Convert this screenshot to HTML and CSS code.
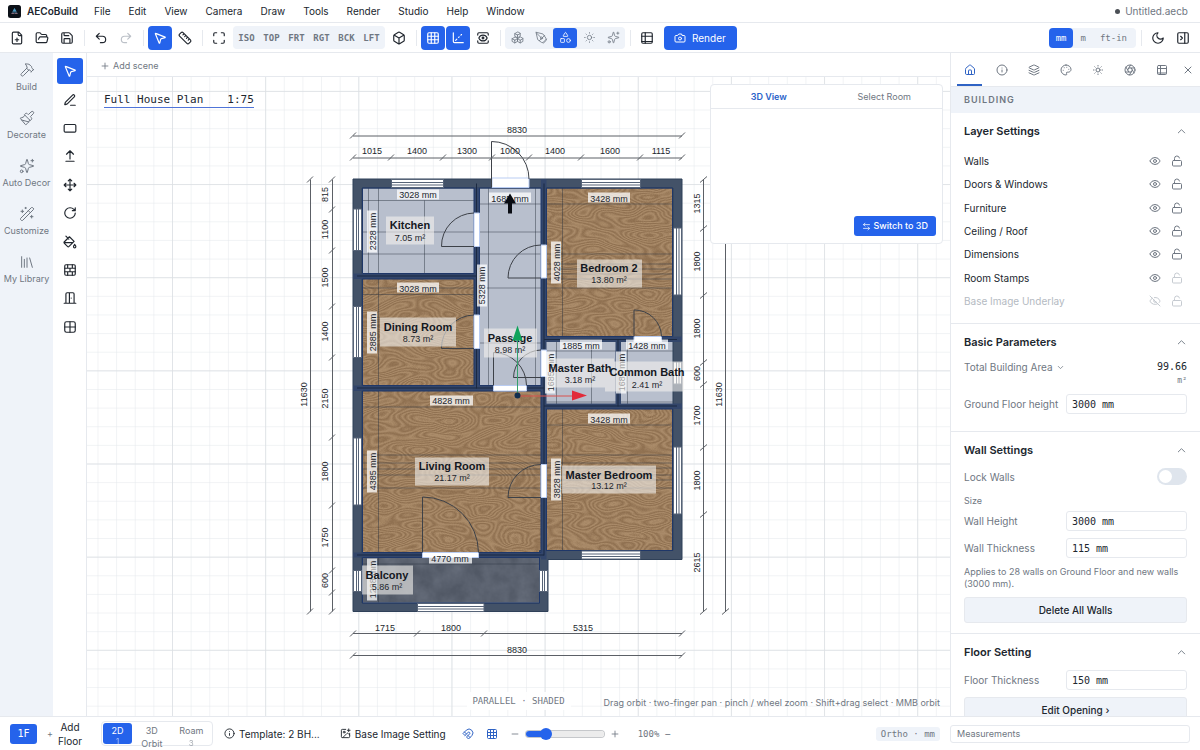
FILE: index.html
```html
<!DOCTYPE html>
<html lang="en">
<head>
<meta charset="utf-8">
<meta name="viewport" content="width=device-width, initial-scale=1">
<title>AECoBuild</title>
<link rel="stylesheet" href="styles.css">
</head>
<body>
<svg class="sprite" aria-hidden="true">
  <symbol id="file-plus" viewBox="0 0 24 24"><path d="M15 2H6a2 2 0 0 0-2 2v16a2 2 0 0 0 2 2h12a2 2 0 0 0 2-2V7ZM14 2v4a2 2 0 0 0 2 2h4M9 15h6M12 18v-6"/></symbol>
  <symbol id="folder" viewBox="0 0 24 24"><path d="m6 14 1.500-2.900A2 2 0 0 1 9.240 10H20a2 2 0 0 1 1.940 2.500l-1.540 6a2 2 0 0 1-1.950 1.500H4a2 2 0 0 1-2-2V5a2 2 0 0 1 2-2h3.900a2 2 0 0 1 1.690.9l.81 1.200a2 2 0 0 0 1.670.9H18a2 2 0 0 1 2 2v2"/></symbol>
  <symbol id="save" viewBox="0 0 24 24"><path d="M15.200 3a2 2 0 0 1 1.400.6l3.800 3.800a2 2 0 0 1 .6 1.400V19a2 2 0 0 1-2 2H5a2 2 0 0 1-2-2V5a2 2 0 0 1 2-2zM17 21v-7a1 1 0 0 0-1-1H8a1 1 0 0 0-1 1v7M7 3v4a1 1 0 0 0 1 1h7"/></symbol>
  <symbol id="undo" viewBox="0 0 24 24"><path d="M9 14 4 9l5-5M4 9h10.500a5.500 5.500 0 0 1 0 11H11"/></symbol>
  <symbol id="redo" viewBox="0 0 24 24"><path d="m15 14 5-5-5-5M20 9H9.500a5.500 5.500 0 0 0 0 11H13"/></symbol>
  <symbol id="pointer" viewBox="0 0 24 24"><path d="M4.037 4.688a.495.495 0 0 1 .651-.651l16 6.500a.5.5 0 0 1-.063.947l-6.124 1.580a2 2 0 0 0-1.438 1.435l-1.579 6.126a.5.5 0 0 1-.947.063z"/></symbol>
  <symbol id="ruler" viewBox="0 0 24 24"><path d="M21.300 15.300a2.400 2.400 0 0 1 0 3.400l-2.600 2.600a2.400 2.400 0 0 1-3.400 0L2.700 8.700a2.410 2.410 0 0 1 0-3.400l2.600-2.600a2.410 2.410 0 0 1 3.400 0ZM14.500 12.500l2-2M11.500 9.500l2-2M8.500 6.500l2-2M17.500 15.500l2-2"/></symbol>
  <symbol id="maximize" viewBox="0 0 24 24"><path d="M8 3H5a2 2 0 0 0-2 2v3M21 8V5a2 2 0 0 0-2-2h-3M3 16v3a2 2 0 0 0 2 2h3M16 21h3a2 2 0 0 0 2-2v-3"/></symbol>
  <symbol id="box" viewBox="0 0 24 24"><path d="M21 8a2 2 0 0 0-1-1.730l-7-4a2 2 0 0 0-2 0l-7 4A2 2 0 0 0 3 8v8a2 2 0 0 0 1 1.730l7 4a2 2 0 0 0 2 0l7-4A2 2 0 0 0 21 16ZM3.300 7l8.700 5 8.700-5M12 22V12"/></symbol>
  <symbol id="grid3" viewBox="0 0 24 24"><rect x="3" y="3" width="18" height="18" rx="2"/><path d="M3 9h18M3 15h18M9 3v18M15 3v18"/></symbol>
  <symbol id="grid2" viewBox="0 0 24 24"><rect x="3" y="3" width="18" height="18" rx="3"/><path d="M3 12h18M12 3v18"/></symbol>
  <symbol id="axes" viewBox="0 0 24 24"><path d="M4 3v15a2 2 0 0 0 2 2h15M8 16l2-2M13 11l1-1M17 7l1-1"/></symbol>
  <symbol id="view" viewBox="0 0 24 24"><path d="M21 17v2a2 2 0 0 1-2 2H5a2 2 0 0 1-2-2v-2M21 7V5a2 2 0 0 0-2-2H5a2 2 0 0 0-2 2v2M18.944 12.330a1 1 0 0 0 0-.660 7.500 7.500 0 0 0-13.888 0 1 1 0 0 0 0 .660 7.500 7.500 0 0 0 13.888 0"/><circle cx="12" cy="12" r="1.500"/></symbol>
  <symbol id="boxes" viewBox="0 0 24 24"><path d="M7 11.500 2 14.200v5L7 22l5-2.800v-5zM17 11.500l-5 2.700v5l5 2.800 5-2.800v-5zM12 2 7 4.800v5l5 2.700 5-2.700v-5zM7 17l-5-2.800M7 17v5M7 17l5-2.800 5 2.800 5-2.800M17 17v5M12 7.500 7 4.800M12 7.500l5-2.700M12 7.500v5"/></symbol>
  <symbol id="pen" viewBox="0 0 24 24"><path d="M2 3l3 13 7 5 4 1 5-5-1-4-5-7zM2 3l9 9M15 21l6-6M8 18l10-10"/><circle cx="12" cy="13" r="2"/></symbol>
  <symbol id="shapes" viewBox="0 0 24 24"><path d="M8.300 10a.7.7 0 0 1-.626-1.079L11.400 3a.7.7 0 0 1 1.198-.043L16.300 8.900a.7.7 0 0 1-.572 1.100Z"/><rect x="3" y="14" width="7" height="7" rx="1"/><circle cx="17.500" cy="17.500" r="3.500"/></symbol>
  <symbol id="sun" viewBox="0 0 24 24"><circle cx="12" cy="12" r="4"/><path d="M12 3v1M12 20v1M3 12h1M20 12h1M18.400 5.600l-.7.700M6.300 17.700l-.7.700M5.600 5.600l.7.700M17.700 17.700l.7.700"/></symbol>
  <symbol id="sparkles" viewBox="0 0 24 24"><path d="M9.937 15.500A2 2 0 0 0 8.500 14.063l-6.135-1.582a.5.5 0 0 1 0-.962L8.500 9.936A2 2 0 0 0 9.937 8.500l1.582-6.135a.5.5 0 0 1 .963 0L14.063 8.500A2 2 0 0 0 15.500 9.937l6.135 1.581a.5.5 0 0 1 0 .964L15.500 14.063a2 2 0 0 0-1.437 1.437l-1.582 6.135a.5.5 0 0 1-.963 0zM20 2v4M22 4h-4"/><circle cx="4" cy="20" r="2"/></symbol>
  <symbol id="table" viewBox="0 0 24 24"><rect x="3" y="3" width="18" height="18" rx="2"/><path d="M3 9h18M3 18h18M9 3v18"/></symbol>
  <symbol id="camera" viewBox="0 0 24 24"><path d="M14.500 4h-5L7 7H4a2 2 0 0 0-2 2v9a2 2 0 0 0 2 2h16a2 2 0 0 0 2-2V9a2 2 0 0 0-2-2h-3z"/><circle cx="12" cy="13" r="3"/></symbol>
  <symbol id="moon" viewBox="0 0 24 24"><path d="M12 3a6 6 0 0 0 9 9 9 9 0 1 1-9-9Z"/></symbol>
  <symbol id="panel" viewBox="0 0 24 24"><rect x="3" y="3" width="18" height="18" rx="2"/><path d="M15 3v18M8 9l3 3-3 3"/></symbol>
  <symbol id="house" viewBox="0 0 24 24"><path d="M15 21v-8a1 1 0 0 0-1-1h-4a1 1 0 0 0-1 1v8M3 10a2 2 0 0 1 .709-1.528l7-5.999a2 2 0 0 1 2.582 0l7 5.999A2 2 0 0 1 21 10v9a2 2 0 0 1-2 2H5a2 2 0 0 1-2-2z"/></symbol>
  <symbol id="info" viewBox="0 0 24 24"><circle cx="12" cy="12" r="10"/><path d="M12 16v-4M12 8v.1"/></symbol>
  <symbol id="layers" viewBox="0 0 24 24"><path d="M12.830 2.180a2 2 0 0 0-1.660 0L2.600 6.080a1 1 0 0 0 0 1.830l8.580 3.910a2 2 0 0 0 1.660 0l8.580-3.900a1 1 0 0 0 0-1.830ZM22 12.650l-9.170 4.160a2 2 0 0 1-1.660 0L2 12.650M22 17.650l-9.170 4.160a2 2 0 0 1-1.660 0L2 17.650"/></symbol>
  <symbol id="palette" viewBox="0 0 24 24"><path d="M12 2a10 10 0 0 0 0 20c.9 0 1.600-.7 1.600-1.700 0-.4-.2-.8-.4-1.100-.3-.3-.4-.7-.4-1.100a1.640 1.640 0 0 1 1.600-1.700h2c3 0 5.600-2.500 5.600-5.500C22 6 17.500 2 12 2zM13.500 6.500v.1M17.500 10.500v.1M8.500 7.500v.1M6.500 12.500v.1"/></symbol>
  <symbol id="aperture" viewBox="0 0 24 24"><circle cx="12" cy="12" r="10"/><path d="m14.310 8 5.740 9.940M9.690 8h11.480M7.380 12l5.740-9.940M9.690 16 3.950 6.060M14.310 16H2.830M16.620 12l-5.740 9.940"/></symbol>
  <symbol id="x" viewBox="0 0 24 24"><path d="M18 6 6 18M6 6l12 12"/></symbol>
  <symbol id="eye" viewBox="0 0 24 24"><path d="M2.062 12.348a1 1 0 0 1 0-.696 10.750 10.750 0 0 1 19.876 0 1 1 0 0 1 0 .696 10.750 10.750 0 0 1-19.876 0"/><circle cx="12" cy="12" r="3"/></symbol>
  <symbol id="eye-off" viewBox="0 0 24 24"><path d="M10.700 5.100a10.700 10.700 0 0 1 11.200 6.600 1 1 0 0 1 0 .7 10.700 10.700 0 0 1-1.400 2.500M14.100 14.200a3 3 0 0 1-4.200-4.200M17.500 17.500a10.800 10.800 0 0 1-15.400-5.100 1 1 0 0 1 0-.7 10.800 10.800 0 0 1 4.400-5.200M2 2l20 20"/></symbol>
  <symbol id="unlock" viewBox="0 0 24 24"><rect x="3" y="11" width="18" height="11" rx="2"/><path d="M7 11V7a5 5 0 0 1 9.900-1"/></symbol>
  <symbol id="up" viewBox="0 0 24 24"><path d="m5 15 7-7 7 7"/></symbol>
  <symbol id="down" viewBox="0 0 24 24"><path d="m6 9 6 6 6-6"/></symbol>
  <symbol id="hammer" viewBox="0 0 24 24"><path d="m15 12-8.373 8.373a1 1 0 1 1-3-3L12 9M18 15l4-4M21.500 11.500l-1.914-1.914A2 2 0 0 1 19 8.172V7l-2.260-2.260a6 6 0 0 0-4.202-1.756L9 2.960l.92.82A6.180 6.180 0 0 1 12 8.400V10l2 2h1.172a2 2 0 0 1 1.414.586L18.500 14.500"/></symbol>
  <symbol id="brush" viewBox="0 0 24 24"><path d="m14.622 17.897-10.680-2.913M18.376 2.622a1 1 0 1 1 3.002 3.002L17.360 9.643a.5.5 0 0 0 0 .707l.944.944a2.410 2.410 0 0 1 0 3.408l-.944.944a.5.5 0 0 1-.707 0L8.354 7.348a.5.5 0 0 1 0-.707l.944-.944a2.410 2.410 0 0 1 3.408 0l.944.944a.5.5 0 0 0 .707 0zM9 8c-1.804 2.710-3.970 3.460-6.583 3.948a.507.507 0 0 0-.302.819l7.320 8.883a1 1 0 0 0 1.185.204C12.735 20.405 16 16.792 16 15"/></symbol>
  <symbol id="wand" viewBox="0 0 24 24"><path d="m21.640 3.640-1.280-1.280a1.210 1.210 0 0 0-1.720 0L2.360 18.640a1.210 1.210 0 0 0 0 1.720l1.280 1.280a1.200 1.200 0 0 0 1.720 0L21.640 5.360a1.200 1.200 0 0 0 0-1.720M14 7l3 3M5 6v4M19 14v4M10 2v2M7 8H3M21 16h-4M11 3H9"/></symbol>
  <symbol id="library" viewBox="0 0 24 24"><path d="m16 6 4 14M12 6v14M8 8v12M4 4v16"/></symbol>
  <symbol id="pencil" viewBox="0 0 24 24"><path d="M13 21h8M16.376 3.622a1 1 0 0 1 3.002 3.002L7.368 18.635a2 2 0 0 1-.855.506l-2.872.838a.5.5 0 0 1-.620-.620l.838-2.872a2 2 0 0 1 .506-.854z"/></symbol>
  <symbol id="rect" viewBox="0 0 24 24"><rect x="2" y="6" width="20" height="13" rx="2"/></symbol>
  <symbol id="push" viewBox="0 0 24 24"><path d="m18 9-6-6-6 6M12 3v14M5 21h14"/></symbol>
  <symbol id="move" viewBox="0 0 24 24"><path d="M12 2v20M15 19l-3 3-3-3M19 9l3 3-3 3M2 12h20M5 9l-3 3 3 3M9 5l3-3 3 3"/></symbol>
  <symbol id="rotate" viewBox="0 0 24 24"><path d="M21 12a9 9 0 1 1-9-9c2.520 0 4.930 1 6.740 2.740L21 8M21 3v5h-5"/></symbol>
  <symbol id="bucket" viewBox="0 0 24 24"><path d="m19 11-8-8-8.600 8.600a2 2 0 0 0 0 2.800l5.200 5.200c.8.8 2 .8 2.800 0L19 11ZM5 2l5 5M2 13h15M22 20a2 2 0 1 1-4 0c0-1.600 1.700-2.400 2-4 .3 1.600 2 2.400 2 4Z"/></symbol>
  <symbol id="bricks" viewBox="0 0 24 24"><rect x="3" y="3" width="18" height="18" rx="2"/><path d="M12 9v6M16 15v6M16 3v6M3 15h18M3 9h18M8 15v6M8 3v6"/></symbol>
  <symbol id="door" viewBox="0 0 24 24"><path d="M11 3h6a2 2 0 0 1 2 2v16M2 21h3M11 21h11M14 12v.1M11 3v18M5 21V5a2 2 0 0 1 2-2h4v18z"/></symbol>
  <symbol id="image-plus" viewBox="0 0 24 24"><path d="M16 5h6M19 2v6M21 11.500V19a2 2 0 0 1-2 2H5a2 2 0 0 1-2-2V5a2 2 0 0 1 2-2h7.500M21 15l-3.100-3.100a2 2 0 0 0-2.800 0L6 21"/><circle cx="9" cy="9" r="2"/></symbol>
  <symbol id="magnet" viewBox="0 0 24 24"><path d="m6 15-4-4 6.750-6.770a7.790 7.790 0 0 1 11 11L13 22l-4-4 6.390-6.360a2.140 2.140 0 0 0-3-3L6 15M5 8l4 4M12 15l4 4"/></symbol>
  <symbol id="swap" viewBox="0 0 24 24"><path d="m8 3-4 4 4 4M4 7h16M16 21l4-4-4-4M20 17H4"/></symbol>
  <symbol id="minus" viewBox="0 0 24 24"><path d="M5 12h14"/></symbol>
  <symbol id="plus" viewBox="0 0 24 24"><path d="M5 12h14M12 5v14"/></symbol>
</svg>

<div class="app">
  <header class="menubar">
    <svg class="logo" viewBox="0 0 26 26" aria-hidden="true"><rect width="26" height="26" rx="5" fill="#0c1118"/><path d="M13 6 6 18h14z" fill="#28475c"/><path d="M13 6 9 13h8z" fill="#4b9cc4"/><path d="m6 18 4-3 3 3 3-3 4 3z" fill="#8a6a78"/></svg>
    <strong class="brand">AECoBuild</strong>
    <nav class="menus" aria-label="Main menu">
      <button>File</button><button>Edit</button><button>View</button><button>Camera</button><button>Draw</button><button>Tools</button><button>Render</button><button>Studio</button><button>Help</button><button>Window</button>
    </nav>
    <span class="filename"><i class="dot"></i>Untitled.aecb</span>
  </header>

  <div class="toolbar" role="toolbar" aria-label="Tools">
    <div class="tools">
      <button class="tool" aria-label="New"><svg class="icon"><use href="#file-plus"/></svg></button>
      <button class="tool" aria-label="Open"><svg class="icon"><use href="#folder"/></svg></button>
      <button class="tool" aria-label="Save"><svg class="icon"><use href="#save"/></svg></button>
    </div>
    <i class="sep"></i>
    <div class="tools">
      <button class="tool" aria-label="Undo"><svg class="icon"><use href="#undo"/></svg></button>
      <button class="tool" aria-label="Redo" disabled><svg class="icon"><use href="#redo"/></svg></button>
    </div>
    <i class="sep"></i>
    <div class="tools">
      <button class="tool active" aria-label="Select"><svg class="icon"><use href="#pointer"/></svg></button>
      <button class="tool" aria-label="Measure"><svg class="icon"><use href="#ruler"/></svg></button>
    </div>
    <i class="sep"></i>
    <div class="tools">
      <button class="tool" aria-label="Fit"><svg class="icon"><use href="#maximize"/></svg></button>
      <div class="views"><button>ISO</button><button>TOP</button><button>FRT</button><button>RGT</button><button>BCK</button><button>LFT</button></div>
      <button class="tool" aria-label="Box view"><svg class="icon"><use href="#box"/></svg></button>
    </div>
    <i class="sep"></i>
    <div class="tools">
      <button class="tool active" aria-label="Grid"><svg class="icon"><use href="#grid3"/></svg></button>
      <button class="tool active" aria-label="Axes"><svg class="icon"><use href="#axes"/></svg></button>
      <button class="tool" aria-label="Visibility"><svg class="icon"><use href="#view"/></svg></button>
    </div>
    <i class="sep"></i>
    <div class="styles">
      <button aria-label="Wireframe"><svg class="icon"><use href="#boxes"/></svg></button>
      <button aria-label="Sketch"><svg class="icon"><use href="#pen"/></svg></button>
      <button class="active" aria-label="Shaded"><svg class="icon"><use href="#shapes"/></svg></button>
      <button aria-label="Lit"><svg class="icon"><use href="#sun"/></svg></button>
      <button aria-label="Realistic"><svg class="icon"><use href="#sparkles"/></svg></button>
    </div>
    <i class="sep"></i>
    <button class="tool" aria-label="Layout"><svg class="icon"><use href="#table"/></svg></button>
    <button class="render"><svg class="icon"><use href="#camera"/></svg>Render</button>
    <div class="units"><button class="active">mm</button><button>m</button><button>ft-in</button></div>
    <i class="sep"></i>
    <div class="tools">
      <button class="tool" aria-label="Dark mode"><svg class="icon"><use href="#moon"/></svg></button>
      <button class="tool" aria-label="Toggle panel"><svg class="icon"><use href="#panel"/></svg></button>
    </div>
  </div>

  <main class="workspace">
    <nav class="rail" aria-label="Modes">
      <button><svg class="icon"><use href="#hammer"/></svg>Build</button>
      <button><svg class="icon"><use href="#brush"/></svg>Decorate</button>
      <button><svg class="icon"><use href="#sparkles"/></svg>Auto Decor</button>
      <button><svg class="icon"><use href="#wand"/></svg>Customize</button>
      <button><svg class="icon"><use href="#library"/></svg>My Library</button>
    </nav>
    <div class="palette">
      <div class="palette-list" role="toolbar" aria-label="Drawing tools">
        <button class="active" aria-label="Select"><svg class="icon"><use href="#pointer"/></svg></button>
        <button aria-label="Line"><svg class="icon"><use href="#pencil"/></svg></button>
        <button aria-label="Rectangle"><svg class="icon"><use href="#rect"/></svg></button>
        <button aria-label="Push pull"><svg class="icon"><use href="#push"/></svg></button>
        <button aria-label="Move"><svg class="icon"><use href="#move"/></svg></button>
        <button aria-label="Rotate"><svg class="icon"><use href="#rotate"/></svg></button>
        <button aria-label="Paint"><svg class="icon"><use href="#bucket"/></svg></button>
        <button aria-label="Wall"><svg class="icon"><use href="#bricks"/></svg></button>
        <button aria-label="Door"><svg class="icon"><use href="#door"/></svg></button>
        <button aria-label="Window"><svg class="icon"><use href="#grid2"/></svg></button>
      </div>
    </div>

    <section class="stage">
      <div class="scenes"><button><svg class="icon"><use href="#plus"/></svg>Add scene</button></div>
      <div class="canvas">
        <svg class="plan" viewBox="87 77 863 640" preserveAspectRatio="xMidYMid slice" role="img" aria-label="Full house plan">
          <defs>
            <pattern id="minor" x="172" y="91.400" width="18.630" height="18.630" patternUnits="userSpaceOnUse"><path d="M0 0H19M0 0V19" stroke="#e4e7eb" fill="none"/></pattern>
            <pattern id="major" x="172" y="91.400" width="93.150" height="93.150" patternUnits="userSpaceOnUse"><path d="M0 0H94M0 0V94" stroke="#dcdfe3" stroke-width="1.500" fill="none"/></pattern>
            <filter id="grain" x="0" y="0" width="100%" height="100%" color-interpolation-filters="sRGB">
              <feTurbulence type="fractalNoise" baseFrequency="0.030 0.070" numOctaves="1" seed="8"/>
              <feColorMatrix values="0 0 0 0 .36  0 0 0 0 .24  0 0 0 0 .13  1 0 0 0 0"/>
              <feComponentTransfer><feFuncA type="table" tableValues="0 .36 0 .36 0 .36 0 .36 0 .36 0 .36 0 .36 0 .36 0 .36 0 .36 0 .36 0 .36 0 .36 0 .36 0"/></feComponentTransfer>
            </filter>
            <filter id="stone" x="0" y="0" width="100%" height="100%" color-interpolation-filters="sRGB">
              <feTurbulence type="fractalNoise" baseFrequency="0.060" numOctaves="4" seed="3"/>
              <feColorMatrix values="0 0 0 0 .75  0 0 0 0 .78  0 0 0 0 .84  .3 0 0 0 -.07"/>
            </filter>
          </defs>
          <rect x="-913" y="-923" width="2863" height="2640" fill="url(#minor)"/>
          <rect x="-913" y="-923" width="2863" height="2640" fill="url(#major)"/>

          <g class="floors">
            <path class="tile" d="M362 188H475V275H362zM479 188H542V387H479zM546 342H617V405H546zM620 342H673V405H620z"/>
            <path class="wood" d="M362 279H475V387H362zM546 188H673V338H546zM362 391H542V554H362zM546 409H673V552H546z"/>
            <rect x="362" y="279" width="113" height="108" filter="url(#grain)"/>
            <rect x="546" y="188" width="127" height="150" filter="url(#grain)"/>
            <rect x="362" y="391" width="180" height="163" filter="url(#grain)"/>
            <rect x="546" y="409" width="127" height="143" filter="url(#grain)"/>
            <rect class="slab" x="362" y="557" width="178" height="46"/>
            <rect x="362" y="557" width="178" height="46" filter="url(#stone)"/>
          </g>

          <path class="joints" d="M362 201H474M368.500 188V274M378.500 188V274M424.500 201V274M362 232.500H474M362 254.500H474M479 204.500H541M488.500 188V386M479 232.500H541M479 254.500H541M479 288.500H541M479 343.500H541M535.500 188V386M362 295H474M378.500 279V386M362 288.500H474M546 204.500H673M562.500 188V338M546 254.500H673M546 264.500H673M546 269.500H673M546 274.500H673M546 279.500H673M546 288.500H673M362 407.500H541M378.500 391V554M362 455.500H541M362 463.500H541M362 469.500H541M362 475.500H541M362 488.500H541M546 425.500H673M562.500 409V552M546 455.500H673M546 463.500H673M546 468.500H673M546 475.500H673M546 480.500H673M546 488.500H673M362 564.500H540M378.500 557V603M556.500 342V405M591.500 342V405M627.500 342V405M546 351.500H673M546 402.500H673"/>

          <path class="wall" fill-rule="evenodd" d="M353 179.500H682V560H548V612H353zM362 188.500V603.500H539.500V551H673V188.500z"/>
          <path class="inner-wall" d="M474 188H479.500V391H474zM541 179.500H546.500V560H541zM353 274H479V279.500H353zM353 386H546V391.500H353zM541 337H682V342.500H541zM541 404H682V409.500H541zM615.500 338H621V409H615.500zM353 553H546V558H353z"/>
          <path class="wall-edges" d="M362.500 188.500H474V274H362.500zM479.500 188.500H541V386H479.500zM362.500 279.500H474V386H362.500zM546.500 188.500H672.500V337H546.500zM362.500 391.500H541V553H362.500zM546.500 409.500H672.500V551H546.500zM362.500 558H539.500V603.500H362.500z"/>
          <path class="wall-core" d="M357 276.500H477M357 388.500H544M357 555.500H544M476.500 184V389M544 184V556M544 340H677M544 406.500H677M618 340V407"/>

          <g class="window">
            <path d="M391.500 180H443.500V188H391.500zM581.500 180H640.500V188H581.500zM353.500 209.500H361.500V251H353.500zM353.500 307H361.500V358H353.500zM353.500 438.500H361.500V505.500H353.500zM353.500 571H361.500V592H353.500zM673.500 228.500H681.500V295.500H673.500zM673.500 362.500H681.500V384.500H673.500zM673.500 447.500H681.500V514.500H673.500zM581.500 551.500H640.500V559.500H581.500zM417.500 604H484V612H417.500zM539.500 571H547.500V592H539.500z"/>
            <path d="M391.500 183H443.500M391.500 185.500H443.500M581.500 183H640.500M581.500 185.500H640.500M356.500 209.500V251M358.500 209.500V251M356.500 307V358M358.500 307V358M356.500 438.500V505.500M358.500 438.500V505.500M356.500 571V592M358.500 571V592M676.500 228.500V295.500M679 228.500V295.500M676.500 362.500V384.500M679 362.500V384.500M676.500 447.500V514.500M679 447.500V514.500M581.500 554.500H640.500M581.500 557H640.500M417.500 607H484M417.500 609.500H484M542.500 571V592M544.500 571V592"/>
          </g>
          <path class="opening" d="M492 178.500H529V188H492zM474 213.500H479.500V247H474zM474 315.500H479.500V349H474zM541 245.500H546.500V278.500H541zM541 350.500H546.500V377H541zM493.500 386H526.500V391.500H493.500zM634 337H661.500V342.500H634zM541 465H546.500V498H541zM422.500 553H478.500V558H422.500z"/>
          <path class="swing" d="M491.500 188V142A37.500 37.500 0 0 1 529 179.500M474 247H441.500A33 33 0 0 1 474 213.500M474 349H441.500A33 33 0 0 1 474 315.500M541 278.500H508A33 33 0 0 1 541 245.500M541 378H513.500A28 28 0 0 1 541 350.500M493.500 386V353A33 33 0 0 1 526.500 386M634 337V310.500A27 27 0 0 1 661.500 337M541 498H508A33 33 0 0 1 541 465M422.500 553V497.500A56 56 0 0 1 478.500 553"/>

          <g class="room-dims">
            <path d="M397 190h42v10h-42zM397 283h42v10h-42zM489 193h42v10h-42zM588 193h42v10h-42zM560 340h42v10h-42zM626 340h42v10h-42zM430 396h43v10h-43zM588 414h42v10h-42zM429 554h43v10h-43zM367 211h10v42h-10zM367 312h10v42h-10zM477 265h10v42h-10zM551 242h10v42h-10zM545 352h10v42h-10zM616 352h10v42h-10zM367 451h10v42h-10zM551 459h10v42h-10zM367 559h10v42h-10z"/>
            <text x="418" y="198">3028 mm</text><text x="418" y="292">3028 mm</text><text x="510" y="202">1685 mm</text><text x="609" y="202">3428 mm</text><text x="581" y="349">1885 mm</text><text x="647" y="349">1428 mm</text><text x="451" y="404">4828 mm</text><text x="609" y="423">3428 mm</text><text x="450" y="562">4770 mm</text>
            <text transform="translate(376 232) rotate(-90)">2328 mm</text><text transform="translate(376 333) rotate(-90)">2885 mm</text><text transform="translate(485 286) rotate(-90)">5328 mm</text><text transform="translate(560 263) rotate(-90)">4028 mm</text><text transform="translate(554 373) rotate(-90)">1685 mm</text><text transform="translate(625 373) rotate(-90)">1685 mm</text><text transform="translate(376 472) rotate(-90)">4385 mm</text><text transform="translate(560 480) rotate(-90)">3828 mm</text><text transform="translate(376 580) rotate(-90)">1228 mm</text>
          </g>

          <g class="stamps">
            <path d="M386 217h48v28h-48zM380 318h76v29h-76zM484 329h53v29h-53zM577 260h65v28h-65zM547 359h67v29h-67zM605 362h79v30h-79zM415 458h74v28h-74zM562 466h94v28h-94zM362 566h51v29h-51z"/>
            <text class="name" x="410" y="229">Kitchen</text><text x="410" y="241">7.05 m²</text>
            <text class="name" x="418" y="331">Dining Room</text><text x="418" y="342">8.73 m²</text>
            <text class="name" x="510" y="342">Passage</text><text x="510" y="353">8.98 m²</text>
            <text class="name" x="609" y="272">Bedroom 2</text><text x="609" y="283">13.80 m²</text>
            <text class="name" x="580" y="372">Master Bath</text><text x="580" y="383">3.18 m²</text>
            <text class="name" x="647" y="376">Common Bath</text><text x="647" y="388">2.41 m²</text>
            <text class="name" x="452" y="470">Living Room</text><text x="452" y="481">21.17 m²</text>
            <text class="name" x="609" y="479">Master Bedroom</text><text x="609" y="489">13.12 m²</text>
            <text class="name" x="387" y="579">Balcony</text><text x="387" y="590">5.86 m²</text>
          </g>

          <g class="dims">
            <path d="M353 136.500H682M353 158.500H682M310.500 180V612M332.500 180V612M703.500 180V612M725.500 180V612M353 634H682M353 656H682"/>
            <path d="M350 139l6-6M679 139l6-6M350 161l6-6M388 161l6-6M440 161l6-6M489 161l6-6M526 161l6-6M578 161l6-6M637 161l6-6M679 161l6-6M307 183l6-6M307 615l6-6M329 183l6-6M329 213l6-6M329 254l6-6M329 310l6-6M329 361l6-6M329 441l6-6M329 509l6-6M329 574l6-6M329 596l6-6M329 615l6-6M700 183l7-6M700 232l7-6M700 299l7-6M700 366l7-6M700 388l7-6M700 451l7-6M700 518l7-6M700 615l7-6M722 615l7-6M350 637l6-6M414 637l6-6M481 637l6-6M679 637l6-6M350 659l6-6M679 659l6-6"/>
            <text x="517" y="133">8830</text><text x="372" y="154">1015</text><text x="417" y="154">1400</text><text x="467" y="154">1300</text><text x="510" y="154">1000</text><text x="555" y="154">1400</text><text x="610" y="154">1600</text><text x="661" y="154">1115</text>
            <text x="385" y="631">1715</text><text x="451" y="631">1800</text><text x="583" y="631">5315</text><text x="517" y="653">8830</text>
            <text transform="translate(307 395) rotate(-90)">11630</text><text transform="translate(328 195) rotate(-90)">815</text><text transform="translate(328 230) rotate(-90)">1100</text><text transform="translate(328 278) rotate(-90)">1500</text><text transform="translate(328 332) rotate(-90)">1400</text><text transform="translate(328 399) rotate(-90)">2150</text><text transform="translate(328 472) rotate(-90)">1800</text><text transform="translate(328 538) rotate(-90)">1750</text><text transform="translate(328 581) rotate(-90)">600</text>
            <text transform="translate(700 204) rotate(-90)">1315</text><text transform="translate(700 262) rotate(-90)">1800</text><text transform="translate(700 329) rotate(-90)">1800</text><text transform="translate(700 374) rotate(-90)">600</text><text transform="translate(700 416) rotate(-90)">1700</text><text transform="translate(700 481) rotate(-90)">1800</text><text transform="translate(700 563) rotate(-90)">2615</text><text transform="translate(722 395) rotate(-90)">11630</text>
          </g>
          <path d="M510 194l6 10h-4v10h-4v-10h-4z" fill="#080b12"/>
          <path d="M517.500 396V340" stroke="#35a06d"/><path d="M517.500 326l5 15h-10z" fill="#0fa35b"/>
          <path d="M517 396.500H573" stroke="#d9534e"/><path d="M587 396l-15-5v10z" fill="#e22b3a"/>
          <circle cx="517.500" cy="396" r="3" fill="#122e4d"/>
        </svg>
        <h1 class="title"><span>Full House Plan</span><span>1:75</span></h1>
        <aside class="preview">
          <div class="preview-tabs"><button class="active">3D View</button><button>Select Room</button></div>
          <button class="switch"><svg class="icon"><use href="#swap"/></svg>Switch to 3D</button>
        </aside>
        <span class="mode">PARALLEL · SHADED</span>
        <span class="hint">Drag orbit · two-finger pan · pinch / wheel zoom · Shift+drag select · MMB orbit</span>
      </div>
    </section>

    <aside class="inspector">
      <nav class="tabs" aria-label="Inspector tabs">
        <button class="active" aria-label="Building"><svg class="icon"><use href="#house"/></svg></button>
        <button aria-label="Info"><svg class="icon"><use href="#info"/></svg></button>
        <button aria-label="Layers"><svg class="icon"><use href="#layers"/></svg></button>
        <button aria-label="Materials"><svg class="icon"><use href="#palette"/></svg></button>
        <button aria-label="Light"><svg class="icon"><use href="#sun"/></svg></button>
        <button aria-label="Render"><svg class="icon"><use href="#aperture"/></svg></button>
        <button aria-label="Tables"><svg class="icon"><use href="#table"/></svg></button>
        <button aria-label="Close"><svg class="icon"><use href="#x"/></svg></button>
      </nav>
      <h2 class="heading">BUILDING</h2>
      <section class="group">
        <h3>Layer Settings<svg class="icon"><use href="#up"/></svg></h3>
        <ul class="layers">
          <li>Walls<button aria-label="Hide walls"><svg class="icon"><use href="#eye"/></svg></button><button aria-label="Lock walls"><svg class="icon"><use href="#unlock"/></svg></button></li>
          <li>Doors &amp; Windows<button aria-label="Hide doors and windows"><svg class="icon"><use href="#eye"/></svg></button><button aria-label="Lock doors and windows"><svg class="icon"><use href="#unlock"/></svg></button></li>
          <li>Furniture<button aria-label="Hide furniture"><svg class="icon"><use href="#eye"/></svg></button><button aria-label="Lock furniture"><svg class="icon"><use href="#unlock"/></svg></button></li>
          <li>Ceiling / Roof<button aria-label="Hide ceiling"><svg class="icon"><use href="#eye"/></svg></button><button aria-label="Lock ceiling"><svg class="icon"><use href="#unlock"/></svg></button></li>
          <li>Dimensions<button aria-label="Hide dimensions"><svg class="icon"><use href="#eye"/></svg></button><button aria-label="Lock dimensions"><svg class="icon"><use href="#unlock"/></svg></button></li>
          <li>Room Stamps<button aria-label="Hide room stamps"><svg class="icon"><use href="#eye"/></svg></button><button aria-label="Lock room stamps" disabled><svg class="icon"><use href="#unlock"/></svg></button></li>
          <li class="off">Base Image Underlay<button aria-label="Show underlay" disabled><svg class="icon"><use href="#eye-off"/></svg></button><button aria-label="Lock underlay" disabled><svg class="icon"><use href="#unlock"/></svg></button></li>
        </ul>
      </section>
      <section class="group basic">
        <h3>Basic Parameters<svg class="icon"><use href="#up"/></svg></h3>
        <div class="area"><button>Total Building Area<svg class="icon"><use href="#down"/></svg></button><span class="value">99.66<small>m²</small></span></div>
        <div class="field"><label for="ground">Ground Floor height</label><input id="ground" type="text" value="3000 mm"></div>
      </section>
      <section class="group walls">
        <h3>Wall Settings<svg class="icon"><use href="#up"/></svg></h3>
        <div class="lock"><label for="lock">Lock Walls</label><input id="lock" class="toggle" type="checkbox"></div>
        <p class="sub">Size</p>
        <div class="field"><label for="height">Wall Height</label><input id="height" type="text" value="3000 mm"></div>
        <div class="field"><label for="thick">Wall Thickness</label><input id="thick" type="text" value="115 mm"></div>
        <p class="note">Applies to 28 walls on Ground Floor and new walls (3000 mm).</p>
        <button class="wide">Delete All Walls</button>
      </section>
      <section class="group floor">
        <h3>Floor Setting<svg class="icon"><use href="#up"/></svg></h3>
        <div class="field"><label for="floor">Floor Thickness</label><input id="floor" type="text" value="150 mm"></div>
        <button class="wide">Edit Opening ›</button>
      </section>
    </aside>
  </main>

  <footer class="status">
    <button class="level">1F</button>
    <button class="add"><span class="plus">+</span><span>Add<br>Floor</span></button>
    <div class="modes"><button class="active">2D<small>1</small></button><button>3D<br>Orbit</button><button>Roam<small>3</small></button></div>
    <button class="link"><svg class="icon"><use href="#info"/></svg>Template: 2 BH...</button>
    <button class="link base"><svg class="icon"><use href="#image-plus"/></svg>Base Image Setting</button>
    <button class="snap" aria-label="Snap"><svg class="icon"><use href="#magnet"/></svg></button>
    <button class="snap" aria-label="Grid"><svg class="icon"><use href="#grid3"/></svg></button>
    <div class="zoom">
      <button aria-label="Zoom out"><svg class="icon"><use href="#minus"/></svg></button>
      <input type="range" min="0" max="100" value="22" aria-label="Zoom">
      <button aria-label="Zoom in"><svg class="icon"><use href="#plus"/></svg></button>
      <output>100%</output><span class="dash">–</span>
    </div>
    <span class="ortho">Ortho · mm</span>
    <input class="measure" type="text" placeholder="Measurements" aria-label="Measurements">
  </footer>
</div>
</body>
</html>
```

FILE: styles.css
```css
:root {
  --blue: #2563eb;
  --ink: #20262e;
  --muted: #6f7782;
  --line: #e6e9ee;
  --soft: #eff3f9;
  --ui: Inter, "Liberation Sans", sans-serif;
  --mono: "DejaVu Sans Mono", "Liberation Mono", monospace;
}

* { box-sizing: border-box; }

body {
  margin: 0;
  font: 10px/14px var(--ui);
  color: var(--ink);
  background: #fff;
}

button {
  padding: 0;
  border: 0;
  background: none;
  font: inherit;
  color: inherit;
}

h1, h2, h3, p, ul { margin: 0; padding: 0; }

.sprite { position: absolute; width: 0; height: 0; }

.icon {
  display: block;
  flex: none;
  width: 14px;
  height: 14px;
  fill: none;
  stroke: currentColor;
  stroke-width: 2;
  stroke-linecap: round;
  stroke-linejoin: round;
}

.app { display: flex; flex-direction: column; height: 100vh; }

/* Menu bar */
.menubar {
  display: flex;
  align-items: center;
  height: 23px;
  padding: 0 12px 0 8px;
  border-bottom: 1px solid var(--line);
}
.logo { width: 13px; height: 13px; margin-right: 6px; }
.brand { font-weight: 600; }
.menus { display: flex; margin-left: 7px; }
.menus button { padding: 0 9px; }
.filename { display: flex; align-items: center; gap: 5px; margin-left: auto; color: var(--muted); }
.dot { width: 5px; height: 5px; border-radius: 50%; background: #4b4f55; }

/* Toolbar */
.toolbar {
  display: flex;
  align-items: center;
  height: 30px;
  padding: 0 5px;
  border-bottom: 1px solid var(--line);
}
.tools { display: flex; align-items: center; gap: 1px; }
.tool {
  display: grid;
  place-items: center;
  width: 24px;
  height: 24px;
  border-radius: 4px;
}
.tool:disabled { color: #bcc1c8; }
.active { background: var(--blue); color: #fff; }
.sep { width: 1px; height: 16px; margin: 0 4px 0 5px; background: var(--line); }
.views, .styles, .units { display: flex; border-radius: 4px; background: var(--soft); }
.views { margin: 0 1px; padding: 0 1px; }
.views button { width: 25px; height: 23px; font: bold 9px/20px var(--mono); color: var(--muted); }
.styles button { display: grid; place-items: center; width: 24px; height: 22px; color: var(--muted); }
.styles .icon { width: 13px; height: 13px; stroke-width: 1.500; }
.styles .active { border-radius: 3px; color: #fff; height: 20px; margin: 1px 0; }
.render {
  display: flex;
  align-items: center;
  gap: 6px;
  height: 24px;
  margin-left: 5px;
  padding: 0 11px 0 10px;
  border-radius: 4px;
  background: var(--blue);
  color: #fff;
}
.render .icon { width: 12px; height: 12px; }
.units { margin-left: auto; padding-right: 2px; }
.units button { height: 20px; padding: 0 7px; font: 9px/18px var(--mono); color: var(--muted); }
.units .active { border-radius: 4px; color: #fff; }

/* Workspace */
.workspace { display: flex; flex: 1; min-height: 0; }
.rail {
  display: flex;
  flex-direction: column;
  gap: 17px;
  width: 53px;
  padding-top: 9px;
  background: var(--soft);
}
.rail button {
  display: flex;
  flex-direction: column;
  align-items: center;
  gap: 3px;
  font-size: 9px;
  line-height: 12px;
  color: var(--muted);
  white-space: nowrap;
}
.rail .icon { width: 16px; height: 16px; stroke-width: 1.500; }
.palette { width: 34px; padding-top: 4px; border-right: 1px solid var(--line); }
.palette-list { display: grid; grid-auto-rows: 1fr; place-items: center; min-height: 284px; }
.palette button { display: grid; place-items: center; width: 26px; height: 26px; border-radius: 3px; }
.palette .icon { width: 14px; height: 14px; }

.stage { display: flex; flex: 1; flex-direction: column; min-width: 0; }
.scenes { display: flex; height: 24px; padding: 3px 13px; border-bottom: 1px solid var(--line); }
.scenes button { display: flex; align-items: center; gap: 3px; font-size: 9px; height: 20px; color: var(--muted); }
.scenes .icon { width: 10px; height: 10px; }
.canvas { position: relative; flex: 1; min-height: 0; overflow: hidden; }
.plan { display: block; width: 100%; height: 100%; font: 9px "Liberation Sans", sans-serif; text-anchor: middle; fill: #22262d; }
.plan .tile { fill: #b8bfcd; }
.plan .wood { fill: #ab8c6a; }
.plan .slab { fill: #515865; }
.plan .wall { fill: #435268; stroke: #2f4058; stroke-width: 1; }
.plan .inner-wall { fill: #33466b; }
.plan .wall-edges { fill: none; stroke: #1f3768; }
.plan .wall-core { fill: none; stroke: #1b2942; }
.plan .joints { fill: none; stroke: #28303f; stroke-opacity: .45; }
.plan .window { fill: #fff; stroke: #566377; }
.plan .opening { fill: #fff; stroke: #b9ccf2; }
.plan .swing { fill: none; stroke: #3d4148; }
.plan .room-dims path { fill: #fff; fill-opacity: .75; }
.plan .stamps path { fill: #f4f1ee; fill-opacity: .6; }
.plan .name { font-weight: bold; font-size: 11px; fill: #14181f; }
.plan .dims path { fill: none; stroke: #5c6066; }

.title {
  position: absolute;
  top: 16px;
  left: 17px;
  display: flex;
  gap: 24px;
  border-bottom: 1px solid #4f74d8;
  font: 11px/14px var(--mono);
}
.preview {
  position: absolute;
  top: 7px;
  right: 7px;
  display: flex;
  flex-direction: column;
  justify-content: space-between;
  width: 233px;
  height: 160px;
  border: 1px solid var(--line);
  border-radius: 4px;
  background: #fff;
}
.preview-tabs { display: flex; border-bottom: 1px solid var(--line); }
.preview-tabs button { flex: 1; height: 23px; font-size: 9px; color: var(--muted); }
.preview-tabs .active { background: none; color: #2a62c9; font-weight: 600; }
.switch {
  display: flex;
  align-items: center;
  align-self: flex-end;
  gap: 3px;
  height: 20px;
  margin: 0 6px 7px;
  padding: 0 8px;
  border-radius: 3px;
  background: var(--blue);
  color: #fff;
  font-size: 9px;
  font-weight: 500;
}
.switch .icon { width: 9px; height: 9px; }
.mode {
  position: absolute;
  bottom: 6px;
  left: 50%;
  translate: -50%;
  padding: 2px 6px;
  border-radius: 3px;
  background: rgb(255 255 255 / .9);
  font: 9px/14px var(--mono);
  color: var(--muted);
}
.hint { position: absolute; right: 10px; bottom: 6px; font-size: 9px; color: var(--muted); }

/* Inspector */
.inspector { width: 250px; border-left: 1px solid var(--line); overflow: hidden; }
.tabs { display: flex; justify-content: space-between; height: 34px; padding: 0 6px; border-bottom: 1px solid var(--line); }
.tabs button { display: grid; place-items: center; width: 25px; color: var(--muted); }
.tabs button:last-child { width: 13px; }
.tabs .active { background: none; border-bottom: 2px solid #2f63c4; padding-top: 2px; color: #2f63c4; }
.tabs .icon { width: 12px; height: 12px; }
.heading { height: 26px; padding-left: 13px; background: var(--soft); font: 600 9px/25px var(--ui); letter-spacing: 1px; color: var(--muted); }
.group { padding: 10px 13px; border-bottom: 1px solid var(--line); }
.group h3 { display: flex; align-items: center; justify-content: space-between; font: 600 11px/16px var(--ui); }
.group h3 .icon { width: 11px; height: 11px; color: var(--muted); }
.layers { display: grid; grid-auto-rows: 1fr; min-height: 164px; margin-top: 10px; list-style: none; }
.layers li { display: flex; align-items: center; padding-right: 4px; }
.layers button { margin-left: 10px; color: var(--muted); }
.layers button:first-of-type { margin-left: auto; }
.layers button:disabled { color: #c6cbd1; }
.layers .icon { width: 12px; height: 12px; }
.layers .off { color: #b4bac2; }
.area { display: flex; justify-content: space-between; margin: 9px 0 7px; }
.area button { display: flex; align-items: center; gap: 3px; height: 16px; color: var(--muted); }
.area .icon { width: 9px; height: 9px; }
.value { font: 10px/16px var(--mono); text-align: right; }
.value small { display: block; font-size: 8px; line-height: 12px; color: var(--muted); }
.field { display: flex; align-items: center; justify-content: space-between; color: var(--muted); }
.field + .field { margin-top: 7px; }
.field input {
  width: 121px;
  height: 20px;
  padding: 0 5px;
  border: 1px solid var(--line);
  border-radius: 3px;
  font: 10px/18px var(--mono);
  color: var(--ink);
}
.basic { padding-bottom: 17px; }
.lock { display: flex; align-items: center; justify-content: space-between; margin-top: 10px; color: var(--muted); }
.toggle {
  appearance: none;
  width: 30px;
  height: 17px;
  margin: 0;
  padding: 2px;
  border-radius: 9px;
  background: #dfe5ed;
}
.toggle::before { content: ""; display: block; width: 13px; height: 13px; border-radius: 50%; background: #fff; }
.sub { margin: 9px 0 3px; font-size: 9px; color: var(--muted); }
.note { margin: 8px 0 7px; font-size: 9px; line-height: 12px; color: var(--muted); }
.wide {
  width: 100%;
  height: 26px;
  border: 1px solid var(--line);
  border-radius: 3px;
  background: var(--soft);
  font-weight: 500;
}
.floor .field { margin: 10px 0 7px; }

/* Status bar */
.status {
  display: flex;
  align-items: center;
  height: 34px;
  padding: 0 10px;
  border-top: 1px solid var(--line);
  white-space: nowrap;
}
.level { width: 27px; height: 20px; border-radius: 3px; background: var(--blue); color: #fff; font-family: var(--mono); }
.add { display: flex; align-items: center; gap: 5px; margin-left: 10px; }
.plus { color: var(--muted); font-size: 9px; }
.modes { display: flex; width: 112px; height: 25px; margin-left: 19px; padding: 1px; border: 1px solid var(--line); border-radius: 4px; }
.modes button { display: flex; flex-direction: column; align-items: center; flex: 1; height: 26px; padding-top: 1px; font-size: 9px; line-height: 13px; color: var(--muted); }
.modes button:nth-child(2) { display: block; }
.modes .active { flex: none; width: 29px; height: 21px; border-radius: 3px; color: #fff; }
.modes small { font-size: 8px; line-height: 12px; opacity: .6; }
.modes .active small { line-height: 8px; }
.link { display: flex; align-items: center; gap: 4px; margin-left: 11px; }
.link .icon { width: 11px; height: 11px; }
.base { margin-left: 20px; }
.snap { margin-left: 12px; color: #2f63c4; }
.base + .snap { margin-left: 16px; }
.snap .icon { width: 12px; height: 12px; }
.zoom { display: flex; align-items: center; gap: 6px; margin-left: 12px; color: var(--muted); }
.zoom .icon { width: 10px; height: 10px; }
.zoom output { margin-left: 12px; font: 9px/14px var(--mono); }
.zoom input {
  appearance: none;
  width: 78px;
  height: 6px;
  margin: 0;
  border-radius: 3px;
  background: linear-gradient(to right, var(--blue) 26%, #ececec 26%);
  box-shadow: 0 0 0 1px #c6c8cb;
}
.zoom input::-webkit-slider-thumb { appearance: none; width: 12px; height: 12px; border-radius: 50%; background: var(--blue); }
.ortho { margin-left: auto; padding: 0 5px; border-radius: 3px; background: var(--soft); font: 9px/14px var(--mono); color: var(--muted); }
.measure { width: 240px; height: 18px; margin-left: 10px; padding: 0 6px; border: 1px solid var(--line); border-radius: 3px; font: 9px/16px var(--ui); }
.measure::placeholder { color: var(--muted); opacity: 1; }
```
